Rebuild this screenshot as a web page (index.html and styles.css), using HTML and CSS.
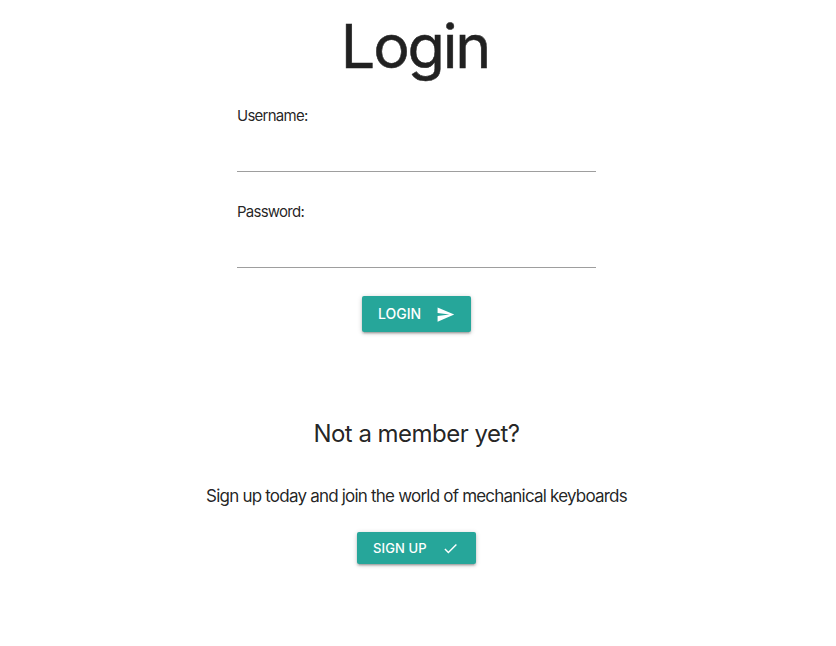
FILE: index.html
```html
<!DOCTYPE html>
<html lang="en">
<head>
<meta charset="utf-8">
<title>Login</title>
<link rel="stylesheet" href="styles.css">
</head>
<body>
<main class="page">
  <h1 class="title">Login</h1>
  <form class="form">
    <label class="label" for="user">Username:</label>
    <input class="input" id="user" type="text">
    <label class="label" for="pass">Password:</label>
    <input class="input" id="pass" type="password">
    <button class="btn" type="button"><span class="btn-text">LOGIN</span>
      <svg class="icon send" viewBox="0 0 24 24"><path d="M2.01 21 23 12 2.01 3 2 10l15 2-15 2z"/></svg>
    </button>
  </form>
  <h2 class="subtitle">Not a member yet?</h2>
  <p class="copy">Sign up today and join the world of mechanical keyboards</p>
  <button class="btn small" type="button"><span class="btn-text">SIGN UP</span>
    <svg class="icon check" viewBox="0 0 24 24"><path d="M9 16.17 4.83 12l-1.42 1.41L9 19 21 7l-1.41-1.41z"/></svg>
  </button>
</main>
</body>
</html>
```
FILE: styles.css
```css
* { box-sizing: border-box; }
body { margin: 0; background: #fff; color: rgba(0,0,0,.87); font-family: Inter, sans-serif; }
.page { width: 833px; min-height: 600px; display: flex; flex-direction: column; align-items: center; }
.title { margin: 11px 0 0; padding-right: 3px; font-size: 61px; font-weight: 420; line-height: 70px; letter-spacing: -2.2px; -webkit-text-stroke: .5px #212121; }
.form { width: 359px; margin-top: 24px; display: flex; flex-direction: column; }
.label { font-size: 15px; line-height: 22px; letter-spacing: -.75px; }
.input { height: 45px; margin: 0 0 29px; padding: 0; border: 0; border-bottom: 1px solid #9e9e9e; background: transparent; outline: none; font: 16px Inter, sans-serif; }
.btn { display: flex; align-items: center; align-self: center; justify-content: space-between; width: 109px; height: 36px; padding: 0 16px; border: 0; border-radius: 2px; background: #26a69a; color: #fff; font: 500 14px Inter, sans-serif; box-shadow: 0 2px 2px rgba(0,0,0,.14), 0 3px 1px -2px rgba(0,0,0,.12), 0 1px 5px rgba(0,0,0,.2); }
.form .btn { margin-top: -1px; }
.btn-text { position: relative; top: -.5px; }
.icon { width: 19px; height: 19px; fill: currentColor; flex: none; }
.subtitle { margin: 85px 0 0; font-size: 24px; font-weight: 400; line-height: 34px; letter-spacing: -.52px; }
.copy { margin: 32px 0 0; font-size: 17px; line-height: 26px; letter-spacing: -.79px; white-space: nowrap; }
.small { width: 119px; height: 32px; margin-top: 23px; font-size: 13px; letter-spacing: .1px; }
.check { width: 17px; height: 17px; margin-right: 1px; }
```
